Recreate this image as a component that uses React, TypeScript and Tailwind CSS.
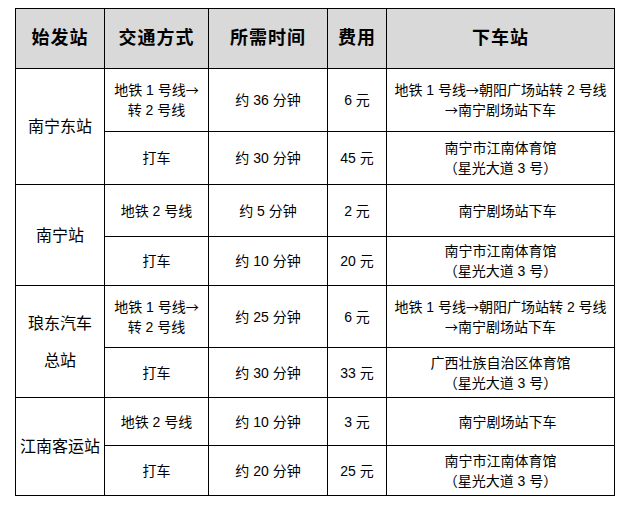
import type { ReactNode } from "react";

const Arrow = () => (
  <span className="inline-block w-[13px] text-[13px]" style={{ fontFamily: '"Noto Sans CJK SC", sans-serif' }}>
    →
  </span>
);

type Item = { mode: ReactNode[]; time: string; cost: string; dest: ReactNode[]; h: string; indent?: boolean };

const metroMode = [
  <>地铁 1 号线<Arrow /></>,
  "转 2 号线",
];
const metroDest = [
  <>地铁 1 号线<Arrow />朝阳广场站转 2 号线</>,
  <><Arrow />南宁剧场站下车</>,
];
const gym = ["南宁市江南体育馆", "（星光大道 3 号）"];

const rows: { station: string[]; items: Item[] }[] = [
  {
    station: ["南宁东站"],
    items: [
      { mode: metroMode, time: "约 36 分钟", cost: "6 元", dest: metroDest, h: "h-[63px]" },
      { mode: ["打车"], time: "约 30 分钟", cost: "45 元", dest: gym, h: "h-[53px]" },
    ],
  },
  {
    station: ["南宁站"],
    items: [
      { mode: ["地铁 2 号线"], time: "约 5 分钟", cost: "2 元", dest: ["南宁剧场站下车"], h: "h-[52px]", indent: true },
      { mode: ["打车"], time: "约 10 分钟", cost: "20 元", dest: gym, h: "h-[49px]" },
    ],
  },
  {
    station: ["琅东汽车", "总站"],
    items: [
      { mode: metroMode, time: "约 25 分钟", cost: "6 元", dest: metroDest, h: "h-[62px]" },
      { mode: ["打车"], time: "约 30 分钟", cost: "33 元", dest: ["广西壮族自治区体育馆", "（星光大道 3 号）"], h: "h-[50px]" },
    ],
  },
  {
    station: ["江南客运站"],
    items: [
      { mode: ["地铁 2 号线"], time: "约 10 分钟", cost: "3 元", dest: ["南宁剧场站下车"], h: "h-[48px]", indent: true },
      { mode: ["打车"], time: "约 20 分钟", cost: "25 元", dest: gym, h: "h-[50px]" },
    ],
  },
];

const cell = "border border-black text-center align-middle p-0";

export default function App() {
  return (
    <div
      className="bg-white w-[629px] h-[507px] pl-[15px] pt-[8px] text-black"
      style={{ fontFamily: '"Liberation Sans", "Noto Sans CJK SC", sans-serif' }}
    >
      <table className="border-collapse table-fixed w-[599px]">
        <colgroup>
          <col className="w-[89px]" />
          <col className="w-[104px]" />
          <col className="w-[119px]" />
          <col className="w-[59px]" />
          <col className="w-[228px]" />
        </colgroup>
        <thead>
          <tr className="h-[60px] bg-[#d9d9d9]">
            {["始发站", "交通方式", "所需时间", "费用", "下车站"].map((t) => (
              <th key={t} className={`${cell} text-[18px] font-bold tracking-[1px]`}>
                {t}
              </th>
            ))}
          </tr>
        </thead>
        <tbody className="text-[14px] leading-[20px]">
          {rows.map((g) =>
            g.items.map((it, i) => (
              <tr key={g.station[0] + i} className={it.h}>
                {i === 0 && (
                  <td rowSpan={2} className={`${cell} text-[16px] leading-[37px]`}>
                    {g.station.map((s) => (
                      <div key={s}>{s}</div>
                    ))}
                  </td>
                )}
                <td className={cell}>
                  {it.mode.map((s, k) => (
                    <div key={k}>{s}</div>
                  ))}
                </td>
                <td className={cell}>{it.time}</td>
                <td className={cell}>{it.cost}</td>
                <td className={`${cell} ${it.indent ? "pl-[14px]" : ""}`}>
                  {it.dest.map((s, k) => (
                    <div key={k}>{s}</div>
                  ))}
                </td>
              </tr>
            ))
          )}
        </tbody>
      </table>
    </div>
  );
}
